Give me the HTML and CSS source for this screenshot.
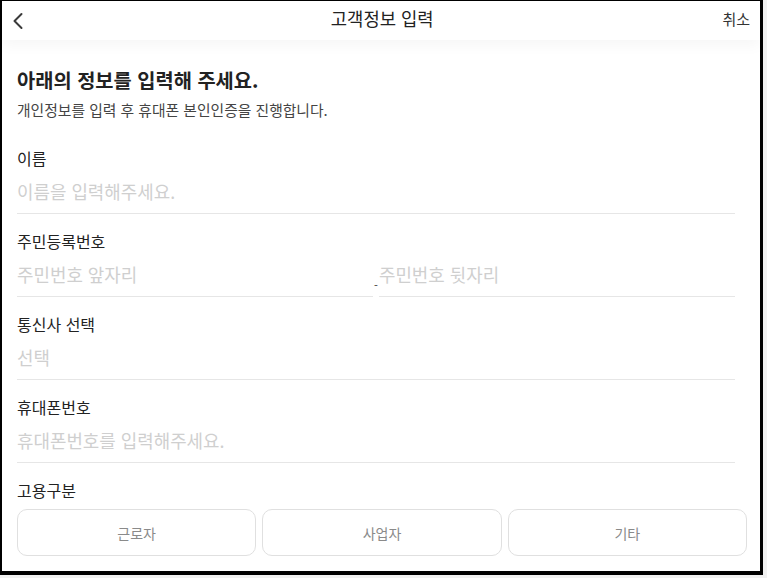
FILE: index.html
```html
<!DOCTYPE html>
<html lang="ko">
<head>
  <meta charset="UTF-8">
  <meta name="viewport" content="width=device-width, initial-scale=1.0">
  <title>고객정보 입력</title>
  <link rel="stylesheet" href="styles.css">
</head>
<body>
  <div class="frame">
    <!-- 상단 헤더 -->
    <header class="top-bar">
      <button class="back-btn" aria-label="뒤로">
        <svg width="12" height="18" viewBox="0 0 12 18">
          <path d="M9.5 2 L2.5 9 L9.5 16" fill="none" stroke="#3a3a3a" stroke-width="2" stroke-linecap="round" stroke-linejoin="round"/>
        </svg>
      </button>
      <h1 class="title">고객정보 입력</h1>
      <button class="cancel-btn">취소</button>
    </header>

    <main class="content">
      <h2 class="heading">아래의 정보를 입력해 주세요.</h2>
      <p class="desc">개인정보를 입력 후 휴대폰 본인인증을 진행합니다.</p>

      <div class="field">
        <label class="label">이름</label>
        <input class="input" type="text" placeholder="이름을 입력해주세요.">
      </div>

      <div class="field">
        <label class="label">주민등록번호</label>
        <div class="ssn-row">
          <input class="input" type="text" placeholder="주민번호 앞자리">
          <span class="dash">-</span>
          <input class="input" type="password" placeholder="주민번호 뒷자리">
        </div>
      </div>

      <div class="field">
        <label class="label">통신사 선택</label>
        <input class="input" type="text" placeholder="선택" readonly>
      </div>

      <div class="field">
        <label class="label">휴대폰번호</label>
        <input class="input" type="tel" placeholder="휴대폰번호를 입력해주세요.">
      </div>

      <div class="field last">
        <label class="label">고용구분</label>
        <div class="choice-row">
          <button class="choice">근로자</button>
          <button class="choice">사업자</button>
          <button class="choice">기타</button>
        </div>
      </div>
    </main>
  </div>
</body>
</html>
```

FILE: styles.css
```css
body {
  margin: 0;
  padding: 0;
  background-color: #f1f1f1;
  font-family: "Noto Sans CJK KR", "Noto Sans", sans-serif;
  color: #222;
}
.frame {
  box-sizing: border-box;
  width: 763px;
  height: 575px;
  background-color: #fff;
  border: 2px solid #000;
  border-top-width: 1px;
  border-right-width: 3px;
  border-bottom-width: 4px;
  overflow: hidden;
}
.top-bar {
  height: 39px;
  display: flex;
  align-items: center;
  justify-content: space-between;
  padding: 0 10px 0 10px;
  background-color: #fff;
  box-shadow: 0 6px 14px rgba(0, 0, 0, 0.035);
  position: relative;
}
.back-btn {
  background: none;
  border: none;
  padding: 0;
  width: 30px;
  height: 30px;
  display: flex;
  align-items: center;
  cursor: pointer;
}
.title {
  margin: 0;
  font-size: 17.75px;
  font-weight: 400;
  color: #222;
  line-height: 22px;
  margin-top: -5px;
}
.cancel-btn {
  background: none;
  border: none;
  padding: 0;
  font-family: inherit;
  font-size: 15px;
  color: #333;
  line-height: 22px;
  margin-top: -4px;
  cursor: pointer;
}
.content {
  padding: 27px 13px 0 15px;
}
.heading {
  margin: 0;
  font-size: 19.8px;
  font-weight: 700;
  line-height: 26px;
  color: #222;
}
.desc {
  margin: 7px 0 27px;
  font-size: 14.8px;
  line-height: 20px;
  color: #444;
}
.field {
  display: flex;
  flex-direction: column;
  margin-right: 12px;
  margin-bottom: 16px;
}
.field.last {
  margin-right: 0;
}
.label {
  font-size: 16px;
  line-height: 22px;
  color: #222;
  margin-bottom: 10px;
}
.input {
  font-family: inherit;
  font-size: 17.9px;
  line-height: 24px;
  height: 35px;
  box-sizing: border-box;
  padding: 0 0 10px 0;
  border: none;
  border-bottom: 1px solid #e6e6e6;
  outline: none;
  color: #222;
  width: 100%;
  background: transparent;
}
.input::placeholder {
  color: #cfcfcf;
}
.ssn-row {
  display: flex;
  align-items: flex-end;
}
.ssn-row .input {
  flex: 1;
  min-width: 0;
}
.dash {
  font-size: 11px;
  line-height: 11px;
  color: #333;
  padding: 0 1px;
  margin-bottom: 6px;
}
.choice-row {
  display: flex;
  gap: 6px;
  margin-top: -2px;
}
.choice {
  flex: 1;
  height: 47px;
  background-color: #fff;
  border: 1px solid #e0e0e0;
  border-radius: 10px;
  font-family: inherit;
  font-size: 14px;
  color: #8a8a8a;
  cursor: pointer;
}
```
